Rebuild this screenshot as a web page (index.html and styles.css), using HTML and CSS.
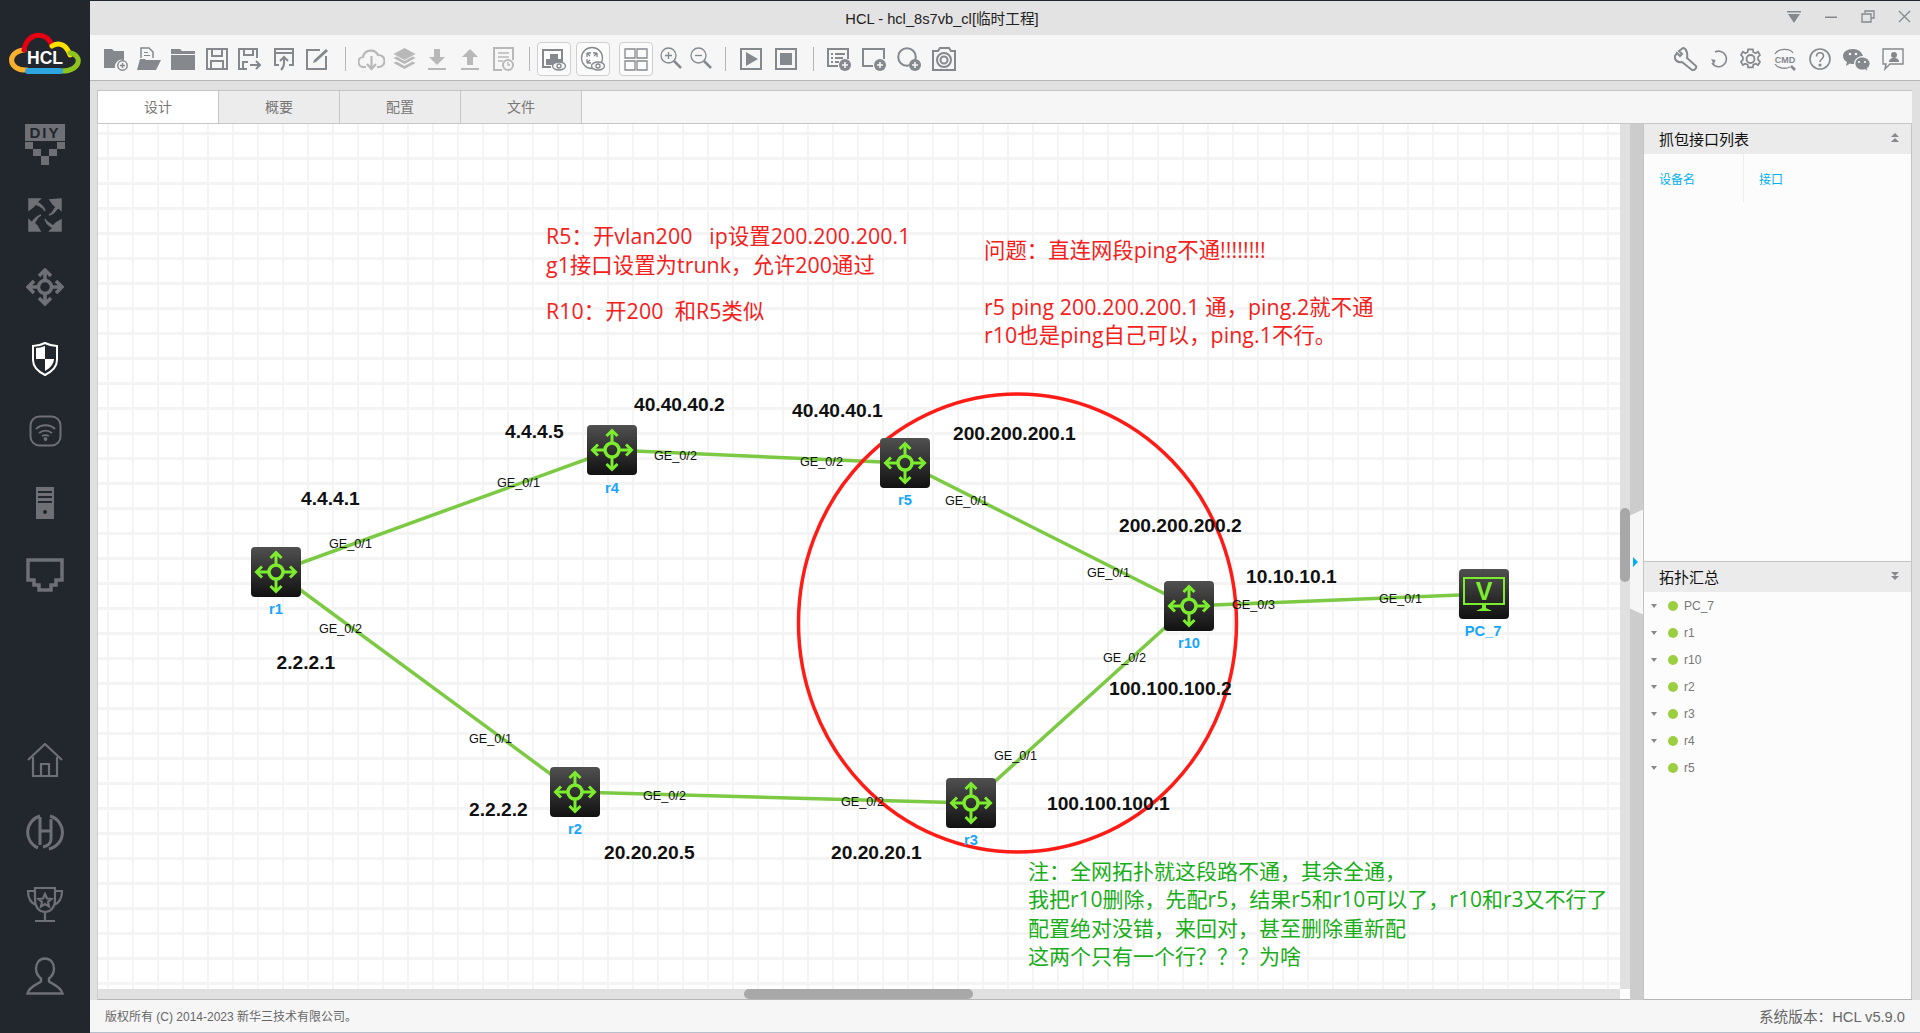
FILE: index.html
```html
<!DOCTYPE html>
<html>

<head>
    <title>HCL</title>
    <meta charset="utf-8">
    <link rel="stylesheet" href="styles.css">
</head>

<body>
<div class="app">

    <div class="sidebar">
        <svg class="logo" width="90" height="44" viewBox="0 32 90 44" fill="none" stroke-width="5" stroke-linecap="round">
            <path d="M27 70C8 71 6 52 24 50" stroke="#fbb02d"/>
            <path d="M24 50C27 31 48 31 52 46" stroke="#e60012"/>
            <path d="M52 46C60 41 67 46 70 55" stroke="#ffe100"/>
            <path d="M70 53C83 55 81 71 62 71" stroke="#8fc31f"/>
            <path d="M28 71H60" stroke="#2ea7e0" stroke-width="6"/>
            <text class="logoText" x="45" y="64">HCL</text>
        </svg>

        <div class="sideItem">
            <svg class="diy" width="42" height="42" viewBox="0 0 42 42">
                <rect x="1" y="0" width="40" height="17"/>
                <text class="diyText" x="21" y="14">DIY</text>
                <path d="M1 18h8v7H1zM33 18h8v7h-8zM9 25h8v7H9zM25 25h8v7h-8zM17 32h8v9h-8z"/>
            </svg>
        </div>
        <div class="sideItem">
            <svg width="34" height="34" viewBox="0 0 34 34">
                <path d="M1 1h11l-3 3 3 2c3 2 4 4 5 7-1-3-3-4-5-5L8 6 5 9 1 12zM33 1v11l-3-3-2 3c-2 3-4 4-7 5 3-1 4-3 5-5l2-3-3-3-3-4zM1 33V22l3 3 2-3c2-3 4-4 7-5-3 1-4 3-5 5l-2 3 3 3 3 5zM33 33H22l3-3-3-2c-3-2-4-4-5-7 1 3 3 4 5 5l3 2 3-3 5-3z" stroke="#6e7075" stroke-width="1.500"/>
            </svg>
        </div>
        <div class="sideItem">
            <svg width="38" height="38" viewBox="0 0 38 38" fill="none" stroke="#6e7075" stroke-width="3.500">
                <circle cx="19" cy="19" r="6.500"/>
                <path d="M19 12V3M13 8l6-6 6 6M19 26v9M13 30l6 6 6-6M12 19H3M8 13l-6 6 6 6M26 19h9M30 13l6 6-6 6"/>
            </svg>
        </div>
        <div class="sideItem">
            <svg width="26" height="34" viewBox="0 0 26 34">
                <path d="M13 1C9 3 5 4 1 4v14c0 7 6 12 12 15 6-3 12-8 12-15V4c-4 0-8-1-12-3z" fill="none" stroke="#fff" stroke-width="2"/>
                <path class="white" d="M13 4c-3 1-6 2-9 2v11h9zM13 17h9c0 5-5 10-9 12z"/>
            </svg>
        </div>
        <div class="sideItem">
            <svg width="33" height="32" viewBox="0 0 33 32" fill="none" stroke="#6e7075" stroke-width="1.800">
                <rect x="1.500" y="1.500" width="30" height="29" rx="9" stroke-width="2"/>
                <path d="M7 14c5-5 14-5 19 0M10 18c4-3 9-3 13 0M13 21c2-1 5-1 7 0"/>
                <circle cx="16.500" cy="24" r="1" fill="#6e7075"/>
            </svg>
        </div>
        <div class="sideItem">
            <svg width="20" height="32" viewBox="0 0 20 32">
                <path fill-rule="evenodd" d="M1 0h18v32H1zM3 4v2h14V4zM3 9v2h14V9zM3 14v2h14v-2zM10 23a2 2 0 1 0 .01 0z"/>
            </svg>
        </div>
        <div class="sideItem">
            <svg width="38" height="34" viewBox="0 0 38 34" fill="none" stroke="#6e7075" stroke-width="3.500">
                <path d="M2 2h34v20h-6v5h-5v5H13v-5H8v-5H2z"/>
            </svg>
        </div>

        <div class="sideSpacer"></div>

        <div class="sideItem">
            <svg width="36" height="34" viewBox="0 0 36 34" fill="none" stroke="#6e7075" stroke-width="2.200">
                <path d="M1 17 18 1l17 16M6 14v19h24V14M14 33V21h8v12"/>
            </svg>
        </div>
        <div class="sideItem">
            <svg width="38" height="38" viewBox="0 0 38 38" fill="none" stroke="#6e7075" stroke-width="3">
                <path d="M12 35A17 17 0 0 1 14 3M24 3a17 17 0 0 1-1 33"/>
                <path d="M14 4v28M14 18h11M25 6v20c0 5-3 7-8 8"/>
            </svg>
        </div>
        <div class="sideItem">
            <svg width="38" height="36" viewBox="0 0 38 36" fill="none" stroke="#6e7075" stroke-width="2.200">
                <path d="M9 2h20v12c0 7-4 12-10 12S9 21 9 14zM9 5H2c0 8 3 12 8 14M29 5h7c0 8-3 12-8 14M19 26v8M9 35h20"/>
                <path d="m19 8 2 4.500 4.500.5-3.500 3 1 4.500-4-2.500-4 2.500 1-4.500-3.500-3 4.500-.5z"/>
            </svg>
        </div>
        <div class="sideItem">
            <svg width="38" height="38" viewBox="0 0 38 38" fill="none" stroke="#6e7075" stroke-width="2.400">
                <path d="M19 1.500c-6 0-9 5-9 10 0 5 2.500 8 5 10v3c-4 3-12 5-13.500 12h35c-1.500-7-9.500-9-13.500-12v-3c2.500-2 5-5 5-10 0-5-3-10-9-10z"/>
            </svg>
        </div>
    </div>

    <div class="main">
        <div class="titleBar">
            <div class="titleText">HCL - hcl_8s7vb_cl[临时工程]</div>
            <div class="winBtns">
                <svg width="14" height="12" viewBox="0 0 14 12"><path d="M0 0h14v1.500H0zM1 3h12L7 12z"/></svg>
                <svg width="14" height="12" viewBox="0 0 14 12"><path d="M1 5.500h12V7H1z"/></svg>
                <svg width="14" height="13" viewBox="0 0 14 13" fill="none" stroke="#85888d" stroke-width="1.300"><path d="M4 3V1h9v7h-3M1 4h9v8H1z"/></svg>
                <svg width="13" height="13" viewBox="0 0 13 13" fill="none" stroke="#85888d" stroke-width="1.300"><path d="m1 1 11 11M12 1 1 12"/></svg>
            </div>
        </div>

        <div class="toolBar">
            <div class="toolGroup first">
                <span class="tool"><svg width="24" height="24" viewBox="0 0 24 24"><path d="M0 2h8l2 2h10v9a7 7 0 0 0-9 8H0z"/><circle cx="18.500" cy="18.500" r="4.700" fill="none" stroke="#85888d" stroke-width="1.500"/><path d="M16 17.800h5v1.400h-5zM17.800 16h1.400v5h-1.400z"/></svg></span>
                <span class="tool"><svg width="24" height="24" viewBox="0 0 24 24"><path d="M4 11V1h8l4 4v6" fill="none" stroke="#85888d" stroke-width="1.500"/><path d="M7 5h4v1H7zM7 8h6v1H7z"/><path d="M3 12h5l1 1h15l-5 10H0z"/></svg></span>
                <span class="tool"><svg width="24" height="24" viewBox="0 0 24 24"><path d="M0 2h9l2 2h13v3H0zM0 8h24v15H0z"/></svg></span>
                <span class="tool"><svg width="22" height="24" viewBox="0 0 22 24" fill="none" stroke="#85888d" stroke-width="2"><path d="M1 2h20v20H1zM6 2v7h10V2M5 22v-8h12v8"/></svg></span>
                <span class="tool"><svg width="24" height="24" viewBox="0 0 24 24" fill="none" stroke="#85888d" stroke-width="2"><path d="M9 22H1V2h18v9M6 2v6h9V2M5 22v-7h5M12 18h10M18 14l4 4-4 4"/></svg></span>
                <span class="tool"><svg width="20" height="24" viewBox="0 0 20 24" fill="none" stroke="#85888d" stroke-width="2"><path d="M5 18H1V2h18v16h-4M1 6h18"/><path d="M10 11v5c0 3-1 5-3 7M6 14l4-4 4 4"/></svg></span>
                <span class="tool"><svg width="23" height="24" viewBox="0 0 23 24" fill="none" stroke="#85888d" stroke-width="2"><path d="M14 3H1v19h19V9"/><path d="m7 16 1-3L20 2l2 2L10 15z" fill="#85888d" stroke="none"/></svg></span>
            </div>
            <div class="toolSep"></div>
            <div class="toolGroup second">
                <span class="tool"><svg width="27" height="24" viewBox="0 0 27 24" fill="none" stroke="#b8b8b8" stroke-width="2.200"><path d="M8 20H6a5 5 0 0 1-1-10 8 8 0 0 1 15-2 6 6 0 0 1 1 12h-2"/><path d="M13.500 9v12M9 17l4.500 5 4.500-5"/></svg></span>
                <span class="tool"><svg width="23" height="24" viewBox="0 0 23 24"><path class="dim" d="m11.500 1 11 6-11 6-11-6zM.5 11l3-1.500 8 4.500 8-4.500 3 1.500-11 6zM.5 16l3-1.500 8 4.500 8-4.500 3 1.500-11 6z"/></svg></span>
                <span class="tool"><svg width="18" height="24" viewBox="0 0 18 24"><path class="dim" d="M6 2h6v8h5l-8 8-8-8h5zM0 21h18v2H0z"/></svg></span>
                <span class="tool"><svg width="18" height="24" viewBox="0 0 18 24"><path class="dim" d="M9 2l8 8h-5v8H6v-8H1zM0 21h18v2H0z"/></svg></span>
                <span class="tool"><svg width="21" height="24" viewBox="0 0 21 24" fill="none" stroke="#b8b8b8" stroke-width="2"><path d="M9 23H1V1h19v12"/><path d="M5 6h11M5 10h11M5 14h5" stroke-width="1.500"/><circle cx="15" cy="18" r="5"/><path d="M15 15v3h2" stroke-width="1.300"/></svg></span>
            </div>
            <div class="toolSep gapped"></div>
            <div class="boxBtn">
                <svg width="26" height="26" viewBox="0 0 26 26"><path d="M1 3h21v15h-2V5H3v15h7v2H1z"/><path d="M5 13h4V8h8v5h3v6H5z"/><ellipse cx="18" cy="20" rx="6.500" ry="4" fill="#f6f6f6" stroke="#85888d" stroke-width="1.300"/><circle cx="18" cy="20" r="2" fill="none" stroke="#85888d" stroke-width="1.300"/></svg>
            </div>
            <div class="boxBtn">
                <svg width="26" height="26" viewBox="0 0 26 26" fill="none" stroke="#85888d" stroke-width="1.300"><circle cx="12" cy="12" r="10.500"/><path d="M7 7h4M7 7v4M7 7l3 3M17 7h-4M17 7v4M17 7l-3 3M7 17h4M7 17v-4M7 17l3-3"/><ellipse cx="18" cy="20" rx="6.500" ry="4" fill="#f6f6f6"/><circle cx="18" cy="20" r="2"/></svg>
            </div>
            <div class="boxBtn spaced">
                <svg width="24" height="24" viewBox="0 0 24 24" fill="none" stroke="#85888d" stroke-width="1.300"><path d="M1 2h10v9H1zM13 2h10v9H13zM1 14h10v9H1zM13 14h10v9H13z"/></svg>
            </div>
            <span class="tool zoomIn"><svg width="22" height="24" viewBox="0 0 22 24" fill="none" stroke="#85888d" stroke-width="1.300"><circle cx="8.500" cy="8.500" r="7.500"/><path d="M5 8.500h7M8.500 5v7"/><path d="m14 14 7 7" stroke-width="2.500"/></svg></span>
            <span class="tool zoomOut"><svg width="22" height="24" viewBox="0 0 22 24" fill="none" stroke="#85888d" stroke-width="1.300"><circle cx="8.500" cy="8.500" r="7.500"/><path d="M5 8.500h7"/><path d="m14 14 7 7" stroke-width="2.500"/></svg></span>
            <div class="toolSep afterZoom"></div>
            <span class="tool play"><svg width="22" height="24" viewBox="0 0 22 24"><path fill-rule="evenodd" d="M0 1h22v22H0zM2 3v18h18V3z"/><path d="M6 5l12 7-12 7z"/></svg></span>
            <span class="tool stop"><svg width="22" height="24" viewBox="0 0 22 24"><path fill-rule="evenodd" d="M0 1h22v22H0zM2 3v18h18V3z"/><path d="M5 6h12v12H5z"/></svg></span>
            <div class="toolSep afterStop"></div>
            <div class="toolGroup third">
                <span class="tool"><svg width="24" height="24" viewBox="0 0 24 24"><path d="M0 1h22v11h-2V3H2v15h9v2H0z"/><path d="M4 6h2v2H4zM8 6h10v2H8zM4 10h2v2H4zM8 10h8v2H8zM4 14h2v2H4zM8 14h4v2H8z"/><circle cx="18" cy="18" r="6"/><path class="light" d="M15 17.200h6v1.600h-6zM17.200 15h1.600v6h-1.600z"/></svg></span>
                <span class="tool"><svg width="24" height="24" viewBox="0 0 24 24"><path d="M0 1h23v11h-2V3H2v15h9v2H0z"/><circle cx="18" cy="18" r="6"/><path class="light" d="M15 17.200h6v1.600h-6zM17.200 15h1.600v6h-1.600z"/></svg></span>
                <span class="tool"><svg width="24" height="24" viewBox="0 0 24 24"><circle cx="10" cy="10" r="8.800" fill="none" stroke="#85888d" stroke-width="2"/><circle cx="18" cy="18" r="6"/><path class="light" d="M15 17.200h6v1.600h-6zM17.200 15h1.600v6h-1.600z"/></svg></span>
                <span class="tool"><svg width="24" height="24" viewBox="0 0 24 24" fill="none" stroke="#85888d" stroke-width="2"><path d="M1 4h5l2-3h9l2 3h4v19H1z"/><circle cx="12" cy="13" r="7"/><circle cx="12" cy="13" r="3.500"/></svg></span>
            </div>
            <div class="toolRight">
                <svg width="24" height="24" viewBox="0 0 24 24" fill="none" stroke="#85888d" stroke-width="2"><path d="M9 1 5 4 8 7 6 9 3 6 1 9c-1 4 3 7 7 6l10 8c2 1 5-2 4-4L13 11c1-5-1-10-4-10z"/></svg>
                <svg width="18" height="24" viewBox="0 0 18 24" fill="none" stroke="#85888d" stroke-width="1.600"><path d="M5 5a7.800 7.800 0 1 1-3 11"/><path d="m1 12 4.500 1-1.500 4.500z" fill="#85888d" stroke="none"/></svg>
                <svg width="21" height="24" viewBox="0 0 21 24" fill="none" stroke="#85888d" stroke-width="1.800"><circle cx="10.500" cy="12" r="4"/><path d="M8 2h5l.5 3 2.500 1 2.500-1.500 2 3.500-2 2v3l2 2-2 3.500-2.500-1.500-2.500 1-.5 3H8l-.5-3-2.500-1-2.500 1.500-2-3.500 2-2v-3l-2-2 2-3.500L5 6l2.500-1z" transform="translate(.5 .5) scale(.95)"/></svg>
                <svg width="24" height="24" viewBox="0 0 24 24" fill="none" stroke="#85888d" stroke-width="1.300"><path d="M2 7C5 1 17 1 20 6M2 17c3 5 11 5 15 3"/><path d="m18 19 4 4" stroke-width="2.500"/><text class="cmdText" x="12" y="15.500">CMD</text></svg>
                <svg width="22" height="24" viewBox="0 0 22 24" fill="none" stroke="#85888d" stroke-width="1.600"><circle cx="11" cy="12" r="10"/><path d="M7.500 9.500c0-5 7-5 7-.5 0 3-3.500 3-3.500 6"/><circle cx="11" cy="18" r=".8" fill="#85888d"/></svg>
                <svg width="27" height="24" viewBox="0 0 27 24"><path d="M10 2c5 0 9 3 10 7-5 0-9 3-9 8h-1c-1 0-2 0-3-.5L3 19l1-4c-2-1-4-3-4-6 0-4 4-7 10-7z"/><path d="M19 10c4 0 8 3 8 6.500 0 2-1 3.500-3 5l1 2.500-3.500-1.500c-1 .5-1.500.5-2.500.5-4 0-7-3-7-6.500S15 10 19 10z" stroke="#f6f6f6" stroke-width=".8"/><circle class="light" cx="7" cy="7" r="1.300"/><circle class="light" cx="13" cy="7" r="1.300"/><circle class="light" cx="16" cy="15" r="1.100"/><circle class="light" cx="22" cy="15" r="1.100"/></svg>
                <svg width="22" height="24" viewBox="0 0 22 24"><path fill="none" stroke="#85888d" stroke-width="1.400" d="M1 2h20v15H8l-5 5 1-5H1z"/><circle cx="12" cy="8" r="3"/><path d="M7 15c0-3 2-4 5-4s5 1 5 4z"/></svg>
            </div>
        </div>

        <div class="workspace">
            <div class="tabs">
                <div class="tab active">设计</div>
                <div class="tab">概要</div>
                <div class="tab">配置</div>
                <div class="tab">文件</div>
            </div>

            <div class="content">
                <div class="canvasWrap">
                    <div class="canvas">
                        <svg class="topo" width="1523" height="864" viewBox="98 124 1523 864">
                            <defs>
                                <linearGradient id="nodeBg" x1="0" y1="0" x2="0" y2="1">
                                    <stop offset="0" stop-color="#505050"/>
                                    <stop offset="1" stop-color="#111"/>
                                </linearGradient>
                                <symbol id="router" viewBox="0 0 50 50">
                                    <rect width="50" height="50" rx="4" fill="url(#nodeBg)"/>
                                    <g fill="none" stroke="#7ced2e" stroke-width="3">
                                        <circle cx="25" cy="25" r="7" stroke-width="3.500"/>
                                        <path d="M25 17V7M25 33v10M17 25H7M33 25h10"/>
                                        <path d="m19.500 11 5.500-5.500 5.500 5.500M19.500 39l5.500 5.500 5.500-5.500M11 19.500 5.500 25l5.500 5.500M39 19.500l5.500 5.500-5.500 5.500"/>
                                    </g>
                                </symbol>
                            </defs>

                            <g class="links">
                                <path d="M276 572 612 450"/>
                                <path d="M276 572 575 792"/>
                                <path d="M575 792 971 803"/>
                                <path d="M612 450 905 463"/>
                                <path d="M905 463 1189 606"/>
                                <path d="M971 803 1189 606"/>
                                <path d="M1189 606 1484 594"/>
                            </g>

                            <ellipse class="mark" cx="1017.500" cy="623" rx="219" ry="229"/>

                            <use href="#router" x="251" y="547" width="50" height="50"/>
                            <use href="#router" x="587" y="425" width="50" height="50"/>
                            <use href="#router" x="880" y="438" width="50" height="50"/>
                            <use href="#router" x="1164" y="581" width="50" height="50"/>
                            <use href="#router" x="550" y="767" width="50" height="50"/>
                            <use href="#router" x="946" y="778" width="50" height="50"/>

                            <rect x="1459" y="569" width="50" height="50" rx="4" fill="url(#nodeBg)"/>
                            <rect x="1464" y="578" width="40" height="26" fill="none" stroke="#7ced2e" stroke-width="2"/>
                            <text class="pcV" x="1484" y="600">V</text>
                            <path d="M1482 604h4v4l6 3h-16l6-3z" fill="#7ced2e"/>

                            <text class="name" x="276" y="614">r1</text>
                            <text class="name" x="612" y="493">r4</text>
                            <text class="name" x="905" y="505">r5</text>
                            <text class="name" x="1189" y="648">r10</text>
                            <text class="name" x="575" y="834">r2</text>
                            <text class="name" x="971" y="845">r3</text>
                            <text class="name" x="1483" y="636">PC_7</text>

                            <text class="port" x="329" y="548">GE_0/1</text>
                            <text class="port" x="319" y="633">GE_0/2</text>
                            <text class="port" x="497" y="487">GE_0/1</text>
                            <text class="port" x="654" y="460">GE_0/2</text>
                            <text class="port" x="800" y="466">GE_0/2</text>
                            <text class="port" x="945" y="505">GE_0/1</text>
                            <text class="port" x="1087" y="577">GE_0/1</text>
                            <text class="port" x="1232" y="609">GE_0/3</text>
                            <text class="port" x="1103" y="662">GE_0/2</text>
                            <text class="port" x="1379" y="603">GE_0/1</text>
                            <text class="port" x="994" y="760">GE_0/1</text>
                            <text class="port" x="841" y="806">GE_0/2</text>
                            <text class="port" x="643" y="800">GE_0/2</text>
                            <text class="port" x="469" y="743">GE_0/1</text>

                            <text class="addr" x="301" y="505">4.4.4.1</text>
                            <text class="addr" x="505" y="438">4.4.4.5</text>
                            <text class="addr" x="276.500" y="669">2.2.2.1</text>
                            <text class="addr" x="469" y="816">2.2.2.2</text>
                            <text class="addr" x="634" y="411">40.40.40.2</text>
                            <text class="addr" x="792" y="417">40.40.40.1</text>
                            <text class="addr" x="953" y="440">200.200.200.1</text>
                            <text class="addr" x="1119" y="532">200.200.200.2</text>
                            <text class="addr" x="1246" y="583">10.10.10.1</text>
                            <text class="addr" x="1109" y="695">100.100.100.2</text>
                            <text class="addr" x="1047" y="810">100.100.100.1</text>
                            <text class="addr" x="604" y="859">20.20.20.5</text>
                            <text class="addr" x="831" y="859">20.20.20.1</text>

                            <text class="note red" x="546" y="244">R5：开vlan200   ip设置200.200.200.1</text>
                            <text class="note red" x="546" y="273">g1接口设置为trunk，允许200通过</text>
                            <text class="note red" x="546" y="319">R10：开200  和R5类似</text>
                            <text class="note red" x="984" y="258">问题：直连网段ping不通!!!!!!!!</text>
                            <text class="note red" x="984" y="315">r5 ping 200.200.200.1 通，ping.2就不通</text>
                            <text class="note red" x="984" y="343">r10也是ping自己可以，ping.1不行。</text>

                            <text class="note green" x="1028" y="879">注：全网拓扑就这段路不通，其余全通，</text>
                            <text class="note green" x="1028" y="907">我把r10删除，先配r5，结果r5和r10可以了，r10和r3又不行了</text>
                            <text class="note green" x="1028" y="936">配置绝对没错，来回对，甚至删除重新配</text>
                            <text class="note green" x="1028" y="964">这两个只有一个行？？？为啥</text>
                        </svg>
                    </div>
                    <div class="vScroll"><div class="vThumb"></div></div>
                    <div class="hScroll"><div class="hThumb"></div></div>
                    <div class="corner"></div>
                </div>

                <div class="splitter">
                    <div class="handle"><div class="handleArrow"></div></div>
                </div>

                <div class="panels">
                    <div class="panel capture">
                        <div class="panelHead">
                            <span>抓包接口列表</span>
                            <svg width="10" height="10" viewBox="0 0 10 10"><path d="M5 0l4 4H1zM5 5l4 4H1z"/></svg>
                        </div>
                        <div class="colHead">
                            <div class="colName">设备名</div>
                            <div class="colPort">接口</div>
                        </div>
                    </div>
                    <div class="panel summary">
                        <div class="panelHead">
                            <span>拓扑汇总</span>
                            <svg width="10" height="10" viewBox="0 0 10 10"><path d="M1 1h8L5 5zM1 5h8L5 9z"/></svg>
                        </div>
                        <div class="treeRow"><i class="caret"></i><i class="dot"></i>PC_7</div>
                        <div class="treeRow"><i class="caret"></i><i class="dot"></i>r1</div>
                        <div class="treeRow"><i class="caret"></i><i class="dot"></i>r10</div>
                        <div class="treeRow"><i class="caret"></i><i class="dot"></i>r2</div>
                        <div class="treeRow"><i class="caret"></i><i class="dot"></i>r3</div>
                        <div class="treeRow"><i class="caret"></i><i class="dot"></i>r4</div>
                        <div class="treeRow"><i class="caret"></i><i class="dot"></i>r5</div>
                    </div>
                </div>
            </div>
        </div>

        <div class="statusBar">
            <span>版权所有 (C) 2014-2023 新华三技术有限公司。</span>
            <span class="version">系统版本：HCL v5.9.0</span>
        </div>
    </div>
</div>
</body>
</html>
```

FILE: styles.css
```css
* {
    box-sizing: border-box;
}

html, body {
    margin: 0;
    height: 100%;
    overflow: hidden;
}

body {
    font-family: "Liberation Sans", "Noto Sans CJK SC", sans-serif;
    background-color: #22272e;
}

svg {
    display: block;
    flex: none;
}

svg:not([fill]) {
    fill: #85888d;
}

.app {
    display: flex;
    height: 1033px;
}

/* left bar */

.sidebar {
    width: 90px;
    display: flex;
    flex-direction: column;
    background-color: #22272e;
    padding-top: 32px;
    padding-bottom: 21px;
}

.sidebar svg:not([fill]) {
    fill: #6e7075;
}

.logo {
    margin-bottom: 31px;
}

.logoText {
    font-size: 17.5px;
    font-weight: bold;
    text-anchor: middle;
    fill: #fff;
    stroke: none;
}

.diy {
    margin-top: 3px;
}

.diyText {
    font-size: 15px;
    font-weight: bold;
    text-anchor: middle;
    letter-spacing: 2px;
    fill: #22272e;
}

.sideItem {
    height: 72px;
    display: flex;
    align-items: center;
    justify-content: center;
}

.sideSpacer {
    flex: 1;
}

.sidebar .white {
    fill: #fff;
}

/* top */

.main {
    flex: 1;
    display: flex;
    flex-direction: column;
    min-width: 0;
    margin-top: 1px;
    background-color: #e3e3e3;
}

.titleBar {
    height: 34px;
    position: relative;
    display: flex;
    align-items: center;
    justify-content: center;
    padding-right: 126px;
    padding-bottom: 2px;
    background-color: #e3e3e3;
}

.titleText {
    font-size: 14.67px;
    color: #222;
}

.winBtns {
    position: absolute;
    top: 9px;
    right: 9px;
    display: flex;
    align-items: center;
    gap: 23px;
}

.toolBar {
    height: 46px;
    display: flex;
    align-items: center;
    padding-left: 9px;
    padding-top: 2px;
    background-color: #f6f6f6;
    border-bottom: 1px solid #b5b5b5;
    box-shadow: 0 1px 2px rgba(0, 0, 0, 0.15);
}

.toolGroup {
    display: flex;
}

.tool {
    width: 33.67px;
    height: 30px;
    display: flex;
    align-items: center;
    justify-content: center;
}

.second .tool {
    width: 33px;
}

.third .tool {
    width: 35px;
}

.toolSep {
    width: 1px;
    height: 24px;
    background-color: #b5b5b5;
    margin-left: 10px;
    margin-right: 9px;
}

.toolSep.gapped {
    margin-left: 9px;
    margin-right: 7px;
}

.boxBtn {
    width: 34px;
    height: 34px;
    margin-right: 5px;
    display: flex;
    align-items: center;
    justify-content: center;
    background-color: #fbfbfb;
    border: 1px solid #cfcfcf;
    border-radius: 4px;
}

.boxBtn.spaced {
    margin-left: 4px;
    margin-right: 3px;
}

.zoomIn, .zoomOut {
    width: 30px;
}

.toolSep.afterZoom {
    margin-left: 9px;
    margin-right: 7.5px;
}

.play, .stop {
    width: 35px;
}

.toolSep.afterStop {
    margin-left: 9.5px;
    margin-right: 7.5px;
}

.toolRight {
    margin-left: auto;
    margin-right: 16px;
    display: flex;
    align-items: center;
    gap: 12px;
}

.cmdText {
    font-size: 9px;
    font-weight: bold;
    text-anchor: middle;
    fill: #85888d;
    stroke: none;
}

.toolBar .light {
    fill: #f6f6f6;
}

.toolBar .dim {
    fill: #b8b8b8;
}

/* work area */

.workspace {
    flex: 1;
    display: flex;
    flex-direction: column;
    min-height: 0;
    padding-top: 9px;
    background-color: #e0e0e0;
}

.tabs {
    height: 34px;
    display: flex;
    margin-left: 7px;
    margin-right: 8px;
    background-color: #f6f6f6;
    border-top: 1px solid #c6c6c6;
    border-bottom: 1px solid #c6c6c6;
    border-left: 1px solid #c6c6c6;
}

.tab {
    width: 121px;
    display: flex;
    align-items: center;
    justify-content: center;
    padding-bottom: 2px;
    font-size: 14px;
    color: #777;
    background-color: #ececec;
    border-right: 1px solid #c6c6c6;
}

.tab.active {
    background-color: #fff;
}

.content {
    flex: 1;
    display: flex;
    min-height: 0;
}

.canvasWrap {
    flex: 1;
    min-width: 0;
    margin-left: 7px;
    display: grid;
    grid-template-columns: 1fr 10px;
    grid-template-rows: 1fr 10px;
    border-left: 1px solid #cfcfcf;
    border-bottom: 1px solid #b5b5b5;
}

.canvas {
    overflow: hidden;
    background-color: #fff;
    background-image:
        linear-gradient(to right, transparent 9px, #f4f4f4 9px, #f4f4f4 11px, transparent 11px),
        linear-gradient(to bottom, transparent 8px, #f4f4f4 8px, #f4f4f4 11px, transparent 11px);
    background-size: 25px 25px;
}

.topo {
    fill: #000;
}

.links path {
    fill: none;
    stroke: #7cc943;
    stroke-width: 3.5;
}

.mark {
    fill: none;
    stroke: #ff1c16;
    stroke-width: 3.5;
}

.name {
    font-size: 14.67px;
    font-weight: bold;
    text-anchor: middle;
    fill: #17a5ff;
}

.port {
    font-size: 12.67px;
    fill: #111;
}

.addr {
    font-size: 19.2px;
    font-weight: bold;
    fill: #111;
}

.pcV {
    font-size: 25px;
    font-weight: bold;
    text-anchor: middle;
    fill: #7ced2e;
}

.note {
    font-family: "Open Sans", "Noto Sans CJK SC", sans-serif;
    white-space: pre;
}

.red {
    font-size: 21.33px;
    letter-spacing: 0.08px;
    fill: #f5201a;
}

.green {
    font-size: 21px;
    fill: #1aad1a;
}

.vScroll {
    background-color: #e0e0e0;
}

.vThumb {
    width: 10px;
    height: 74px;
    margin-top: 384px;
    background-color: #a8a8a8;
    border-radius: 5px;
}

.hScroll {
    background-color: #e0e0e0;
}

.hThumb {
    width: 229px;
    height: 10px;
    margin-left: 646px;
    background-color: #a8a8a8;
    border-radius: 5px;
}

.corner {
    background-color: #fff;
}

.splitter {
    width: 13px;
    display: flex;
    align-items: center;
    background-color: #cccccc;
}

.handle {
    width: 13px;
    height: 105px;
    display: flex;
    align-items: center;
    background-color: #f6f6f6;
    clip-path: polygon(0 6px, 100% 0, 100% 100%, 0 calc(100% - 6px));
}

.handleArrow {
    margin-left: 3px;
    border-left: 5px solid #00b0f0;
    border-top: 5px solid transparent;
    border-bottom: 5px solid transparent;
}

.panels {
    width: 269px;
    margin-right: 8px;
    display: flex;
    flex-direction: column;
    background-color: #fcfcfc;
    border-left: 1px solid #c4c4c4;
    border-right: 1px solid #c4c4c4;
    border-bottom: 1px solid #b5b5b5;
}

.panel.capture {
    height: 437px;
}

.panel.summary {
    flex: 1;
    border-top: 1px solid #c4c4c4;
}

.panelHead {
    height: 30px;
    display: flex;
    align-items: center;
    justify-content: space-between;
    padding-left: 15px;
    padding-right: 11px;
    padding-bottom: 2px;
    font-size: 15px;
    color: #111;
    background-color: #ebebeb;
}

.colHead {
    height: 48px;
    display: flex;
    align-items: center;
    font-size: 12px;
    color: #00b0f0;
}

.colName {
    width: 100px;
    height: 100%;
    display: flex;
    align-items: center;
    padding-left: 15px;
    border-right: 1px solid #eeeeee;
}

.colPort {
    padding-left: 15px;
}

.treeRow {
    height: 27px;
    display: flex;
    align-items: center;
    padding-left: 7px;
    font-size: 12px;
    color: #777;
}

.caret {
    flex: none;
    width: 0;
    border-top: 4px solid #85888d;
    border-left: 3.5px solid transparent;
    border-right: 3.5px solid transparent;
    margin-right: 11px;
}

.dot {
    flex: none;
    width: 10px;
    height: 10px;
    border-radius: 50%;
    background-color: #9ccf40;
    margin-right: 6px;
}

/* bottom */

.statusBar {
    height: 33px;
    display: flex;
    align-items: center;
    justify-content: space-between;
    padding-left: 15px;
    padding-right: 15px;
    padding-bottom: 2px;
    font-size: 12px;
    color: #666;
    background-color: #f6f6f6;
    border-bottom: 1px solid #b5c0cc;
}

.version {
    font-size: 14.67px;
}
```
